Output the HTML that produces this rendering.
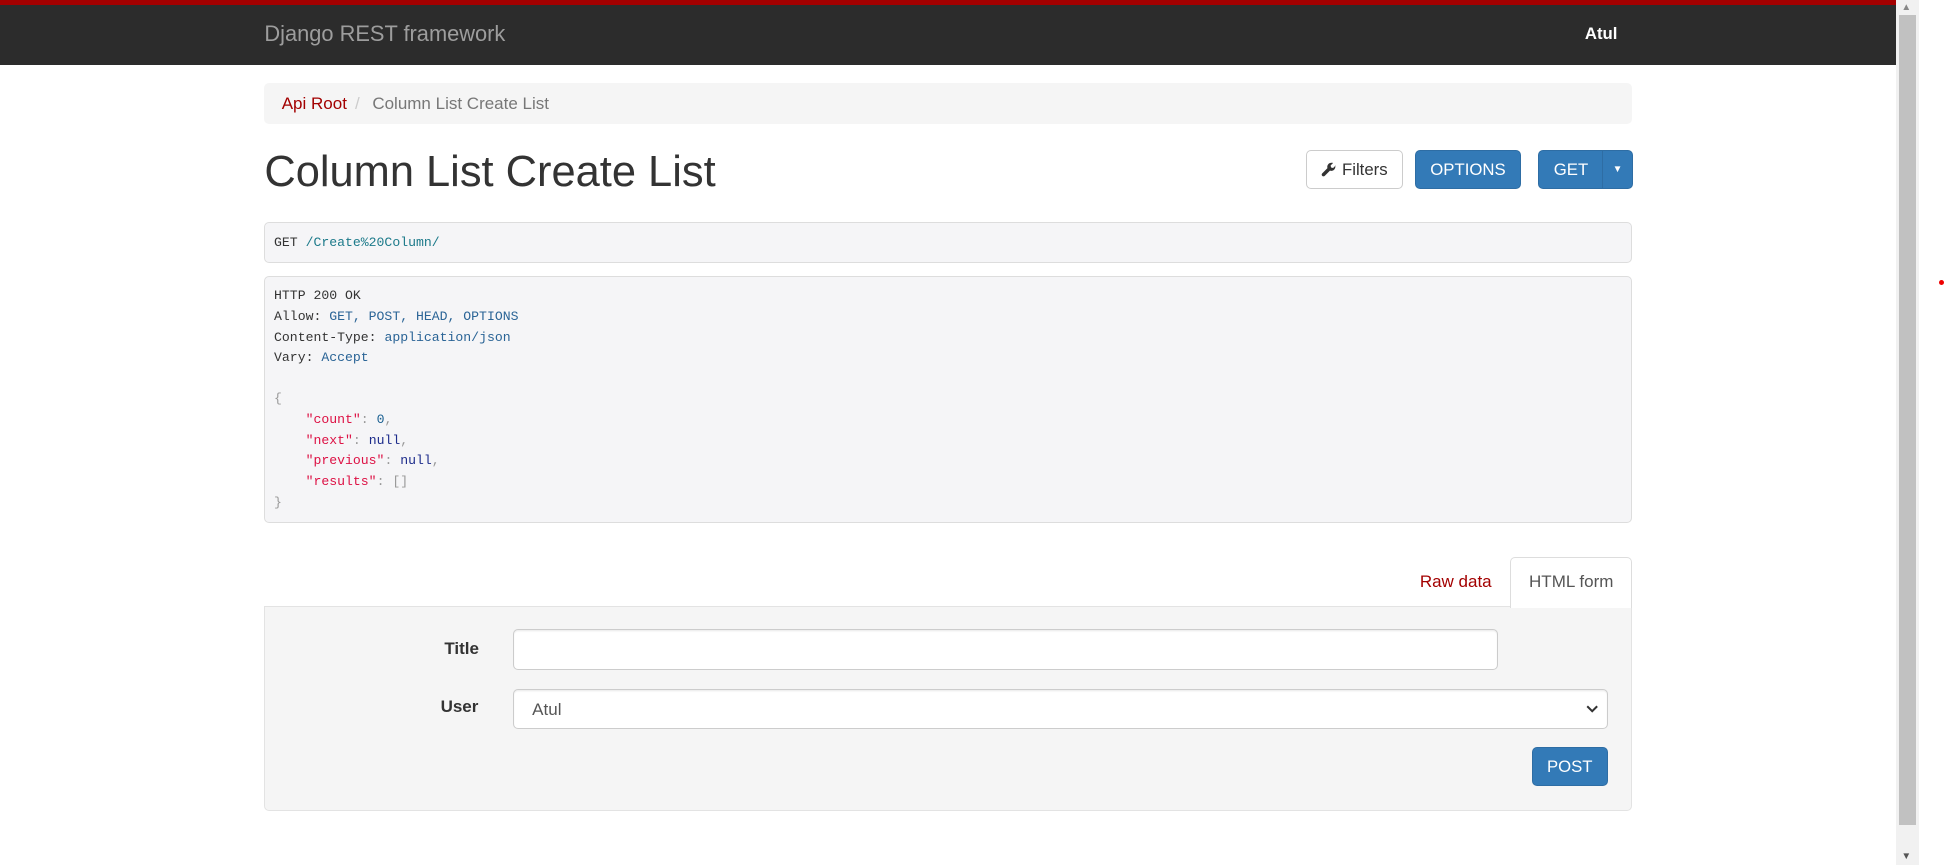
<!DOCTYPE html>
<html><head><meta charset="utf-8"><style>
html{zoom:1.2411}
body{margin:0;width:1568px;height:697px;overflow:hidden;font-family:"Liberation Sans",sans-serif;font-size:13.7px;color:#333;background:#fff;position:relative}
.abs{position:absolute}
.top{left:0;top:0;width:1528px;height:4px;background:#a30000}
.nav{left:0;top:4px;width:1528px;height:48px;background:#2c2c2c}
.brand{left:213px;top:17px;font-size:17.6px;color:#9d9d9d}
.user{left:1277px;top:19px;font-size:13.5px;color:#fff;font-weight:bold}
.sb{left:1528px;top:0;width:18px;height:697px;background:#f1f1f1}
.thumb{left:1530px;top:12px;width:14px;height:653px;background:#c1c1c1}
.crumb{left:213px;top:67px;width:1102px;height:33px;background:#f5f5f5;border-radius:4px}
.crumb span{position:absolute;top:9px}
h1{position:absolute;left:213px;top:119px;margin:0;font-size:35px;font-weight:normal;color:#333}
.btn{position:absolute;top:121px;height:30px;border:1px solid #2e6da4;background:#337ab7;color:#fff;border-radius:4px;font-size:13.5px;line-height:30px;text-align:center;box-sizing:content-box}
.box{position:absolute;left:213px;width:1100px;background:#f5f5f7;border:1px solid #ddd;border-radius:4px;font-family:"Liberation Mono",monospace;font-size:10.6px;color:#333}
.box pre{margin:0;font:inherit;line-height:16.6px;position:absolute;left:7px}
.b{color:#2a6496}.s{color:#dd1144}.n{color:#195f91}.p{color:#999}.k{color:#1c2b8b}.t{color:#1c7a8a}
.well{left:213px;top:488px;width:1100px;height:164px;background:#f5f5f5;border:1px solid #e3e3e3;border-radius:0 0 4px 4px}
.tab{left:1217px;top:449px;width:96px;height:40px;background:#fff;border:1px solid #ddd;border-bottom:none;border-radius:4px 4px 0 0}
.inp{position:absolute;background:#fff;border:1px solid #ccc;border-radius:4px;box-shadow:inset 0 1px 1px rgba(0,0,0,.075)}
.lbl{position:absolute;font-weight:bold;font-size:13.7px;color:#333}
</style></head><body>
<div class="abs top"></div><div class="abs nav"></div>
<div class="abs brand">Django REST framework</div>
<div class="abs user">Atul</div>
<div class="abs sb"></div><div class="abs thumb"></div>
<div class="abs" style="left:1532px;top:2px;font-size:8px;color:#888">▲</div>
<div class="abs" style="left:1532px;top:686px;font-size:8px;color:#555">▼</div>
<div class="abs" style="left:1562px;top:226px;width:4px;height:4px;border-radius:2px;background:#e00"></div>
<div class="abs crumb"><span style="left:14px;color:#a30000">Api Root</span><span style="left:73px;color:#ccc">/</span><span style="left:87px;color:#777">Column List Create List</span></div>
<h1>Column List Create List</h1>
<div class="btn" style="left:1052px;width:77px;background:#fff;color:#333;border-color:#ccc"><svg width="13" height="13" viewBox="0 0 16 16" style="vertical-align:-2px"><path d="M14.5 3.5l-2.5 2.5-2-.5-.5-2 2.5-2.5c-1.8-.6-3.8-.1-4.9 1.3-.9 1.1-1.1 2.5-.7 3.8L1.2 11.3c-.7.7-.7 1.8 0 2.5s1.8.7 2.5 0l5.2-5.2c1.3.4 2.7.2 3.8-.7 1.4-1.1 1.9-3.1 1.3-4.9z" fill="#333"/></svg> Filters</div>
<div class="btn" style="left:1140px;width:84px">OPTIONS</div>
<div class="btn" style="left:1239px;width:52px;border-radius:4px 0 0 4px">GET</div>
<div class="btn" style="left:1291px;width:23px;border-radius:0 4px 4px 0;font-size:8px">▼</div>
<div class="box" style="top:179px;height:31px"><pre style="top:8px">GET <span class="t">/Create%20Column/</span></pre></div>
<div class="box" style="top:222px;height:198px"><pre style="top:8px">HTTP 200 OK
Allow: <span class="b">GET, POST, HEAD, OPTIONS</span>
Content-Type: <span class="b">application/json</span>
Vary: <span class="b">Accept</span>

<span class="p">{</span>
    <span class="s">"count"</span><span class="p">:</span> <span class="n">0</span><span class="p">,</span>
    <span class="s">"next"</span><span class="p">:</span> <span class="k">null</span><span class="p">,</span>
    <span class="s">"previous"</span><span class="p">:</span> <span class="k">null</span><span class="p">,</span>
    <span class="s">"results"</span><span class="p">:</span> <span class="p">[]</span>
<span class="p">}</span></pre></div>
<div class="abs well"></div>
<div class="abs tab"></div>
<div class="abs" style="left:1144px;top:461px;color:#a30000">Raw data</div>
<div class="abs" style="left:1232px;top:461px;color:#555">HTML form</div>
<div class="lbl" style="left:358px;top:515px">Title</div>
<div class="inp" style="left:413px;top:507px;width:792px;height:31px"></div>
<div class="lbl" style="left:355px;top:562px">User</div>
<div class="inp" style="left:413px;top:555px;width:881px;height:31px"><span style="position:absolute;left:15px;top:8px;color:#555">Atul</span><svg style="position:absolute;right:7px;top:12px" width="10" height="7" viewBox="0 0 10 7"><path d="M1 1l4 4 4-4" stroke="#333" stroke-width="1.6" fill="none"/></svg></div>
<div class="btn" style="left:1234px;top:602px;width:60px">POST</div>
</body></html>
